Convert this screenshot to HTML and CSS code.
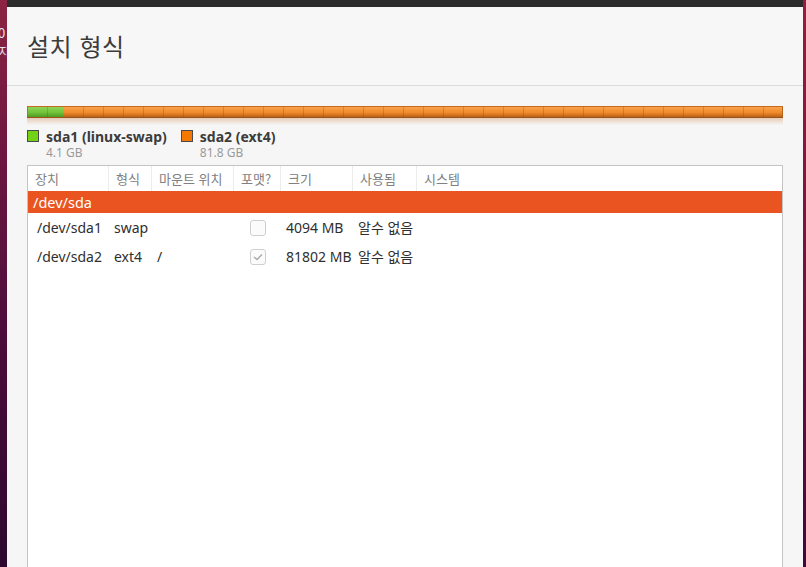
FILE: index.html
```html
<!DOCTYPE html>
<html lang="ko">
<head>
  <meta charset="UTF-8">
  <title>설치 형식</title>
  <link rel="stylesheet" href="styles.css">
</head>
<body>
  <div class="desktop">
    <div class="edge edge-left">
      <span class="peek peek-1">0</span>
      <span class="peek peek-2">지</span>
    </div>

    <div class="window">
      <div class="titlebar"></div>

      <div class="header">
        <h1>설치 형식</h1>
      </div>

      <div class="content">
        <div class="partbar">
          <div class="seg seg-swap" style="width: 4.8%"></div>
          <div class="seg seg-ext4"></div>
        </div>
        <div class="partbar-glow"></div>

        <div class="legend">
          <div class="legend-item">
            <span class="swatch swatch-swap"></span>
            <div>
              <div class="legend-name">sda1 (linux-swap)</div>
              <div class="legend-size">4.1 GB</div>
            </div>
          </div>
          <div class="legend-item">
            <span class="swatch swatch-ext4"></span>
            <div>
              <div class="legend-name">sda2 (ext4)</div>
              <div class="legend-size">81.8 GB</div>
            </div>
          </div>
        </div>

        <div class="table">
          <div class="thead">
            <div class="th">장치</div>
            <div class="th">형식</div>
            <div class="th">마운트 위치</div>
            <div class="th">포맷?</div>
            <div class="th">크기</div>
            <div class="th">사용됨</div>
            <div class="th last">시스템</div>
          </div>

          <div class="row-disk">/dev/sda</div>

          <div class="row">
            <div class="td dev">/dev/sda1</div>
            <div class="td">swap</div>
            <div class="td"></div>
            <div class="td check-cell"><span class="check"></span></div>
            <div class="td">4094 MB</div>
            <div class="td">알수 없음</div>
            <div class="td"></div>
          </div>

          <div class="row">
            <div class="td dev">/dev/sda2</div>
            <div class="td">ext4</div>
            <div class="td">/</div>
            <div class="td check-cell">
              <span class="check checked">
                <svg width="10" height="8" viewBox="0 0 10 8"><path d="M1 4 L4 6.5 L9 1.5" fill="none" stroke="#a8a8a8" stroke-width="1.3"/></svg>
              </span>
            </div>
            <div class="td">81802 MB</div>
            <div class="td">알수 없음</div>
            <div class="td"></div>
          </div>
        </div>
      </div>
    </div>

    <div class="edge edge-right"></div>
  </div>
</body>
</html>
```

FILE: styles.css
```css
html, body {
  margin: 0;
  height: 100%;
  overflow: hidden;
}

body {
  font-family: "Noto Sans", "Noto Sans CJK KR", sans-serif;
  background: #3d0b35;
}

.desktop {
  display: flex;
  height: 567px;
}

.edge {
  background: linear-gradient(180deg, #8c2443 0%, #6a1540 30%, #4a0c3c 60%, #2e0730 100%);
}

.edge-left {
  width: 7px;
  overflow: hidden;
  display: flex;
  flex-direction: column;
  font-family: "Noto Sans CJK KR", sans-serif;
  color: #e6e0ea;
  font-size: 13px;
}

.peek {
  display: block;
  margin-left: -2px;
  line-height: 18px;
}

.peek-1 {
  margin-top: 24px;
}

.edge-right {
  width: 3px;
  background: linear-gradient(180deg, #9a1c3a 0%, #7a1440 40%, #40083a 100%);
}

.window {
  flex: 1;
  background: #f6f6f6;
  display: flex;
  flex-direction: column;
}

.titlebar {
  height: 7px;
  background: #2c2c2c;
}

.header {
  height: 78px;
  background: #f7f7f7;
  border-bottom: 1px solid #dcdcdc;
  display: flex;
  align-items: center;
  padding-left: 20px;
}

.header h1 {
  margin: 0;
  font-family: "Noto Sans CJK KR", sans-serif;
  font-weight: 400;
  font-size: 24px;
  color: #3c3c3c;
  letter-spacing: 0.5px;
  margin-top: -2px;
}

.content {
  flex: 1;
  display: flex;
  flex-direction: column;
  padding: 20px 20px 0 20px;
}

/* partition bar */
.partbar {
  display: flex;
  height: 10px;
  border-top: 1px solid #c86a1c;
  border-bottom: 1px solid #9a5418;
}

.seg {
  height: 100%;
  background-image:
    repeating-linear-gradient(90deg, transparent 0 19px, rgba(120, 60, 10, 0.25) 19px 20px),
    linear-gradient(180deg, var(--top) 0%, var(--mid) 55%, var(--bot) 100%);
}

.seg-swap {
  --top: #8fd55a;
  --mid: #72c23a;
  --bot: #4f9a22;
  border-left: 1px solid #5a9c2c;
}

.seg-ext4 {
  flex: 1;
  --top: #f8a24c;
  --mid: #f08a2a;
  --bot: #b9621a;
  border-right: 1px solid #b8641c;
}

.partbar-glow {
  height: 7px;
  background: linear-gradient(180deg, rgba(200, 120, 60, 0.35), rgba(246, 246, 246, 0));
}

/* legend */
.legend {
  display: flex;
  gap: 14px;
  margin-top: 3px;
}

.legend-item {
  display: flex;
  align-items: flex-start;
  gap: 7px;
}

.swatch {
  width: 10px;
  height: 10px;
  margin-top: 2px;
  border: 1px solid #4a4a4a;
}

.swatch-swap {
  background: #73d216;
}

.swatch-ext4 {
  background: #f57900;
}

.legend-name {
  font-size: 14px;
  font-weight: 700;
  color: #3c3c3c;
  line-height: 17px;
}

.legend-size {
  font-size: 12px;
  color: #9a9a9a;
  line-height: 15px;
}

/* table */
.table {
  flex: 1;
  margin-top: 5px;
  background: #fff;
  border: 1px solid #c4c4c4;
  border-bottom: none;
}

.thead,
.row {
  display: grid;
  grid-template-columns: 81px 43px 82px 47px 72px 64px 1fr;
}

.thead {
  height: 25px;
}

.th {
  font-family: "Noto Sans CJK KR", sans-serif;
  font-size: 13px;
  color: #808080;
  padding-left: 7px;
  line-height: 25px;
  border-right: 1px solid #ececec;
  white-space: nowrap;
}

.th.last {
  border-right: none;
}

.row-disk {
  height: 22px;
  line-height: 22px;
  background: #e95420;
  color: #fff;
  font-size: 14.5px;
  padding-left: 5px;
}

.row {
  height: 29px;
}

.td {
  font-size: 14px;
  color: #2f2f2f;
  line-height: 29px;
  padding-left: 5px;
  white-space: nowrap;
}

.td.dev {
  padding-left: 9px;
}

.check-cell {
  padding-left: 0;
  display: flex;
  align-items: center;
  justify-content: center;
}

.check {
  width: 14px;
  height: 14px;
  border: 1px solid #cfcfcf;
  border-radius: 3px;
  background: #fbfbfb;
  display: flex;
  align-items: center;
  justify-content: center;
}
```
